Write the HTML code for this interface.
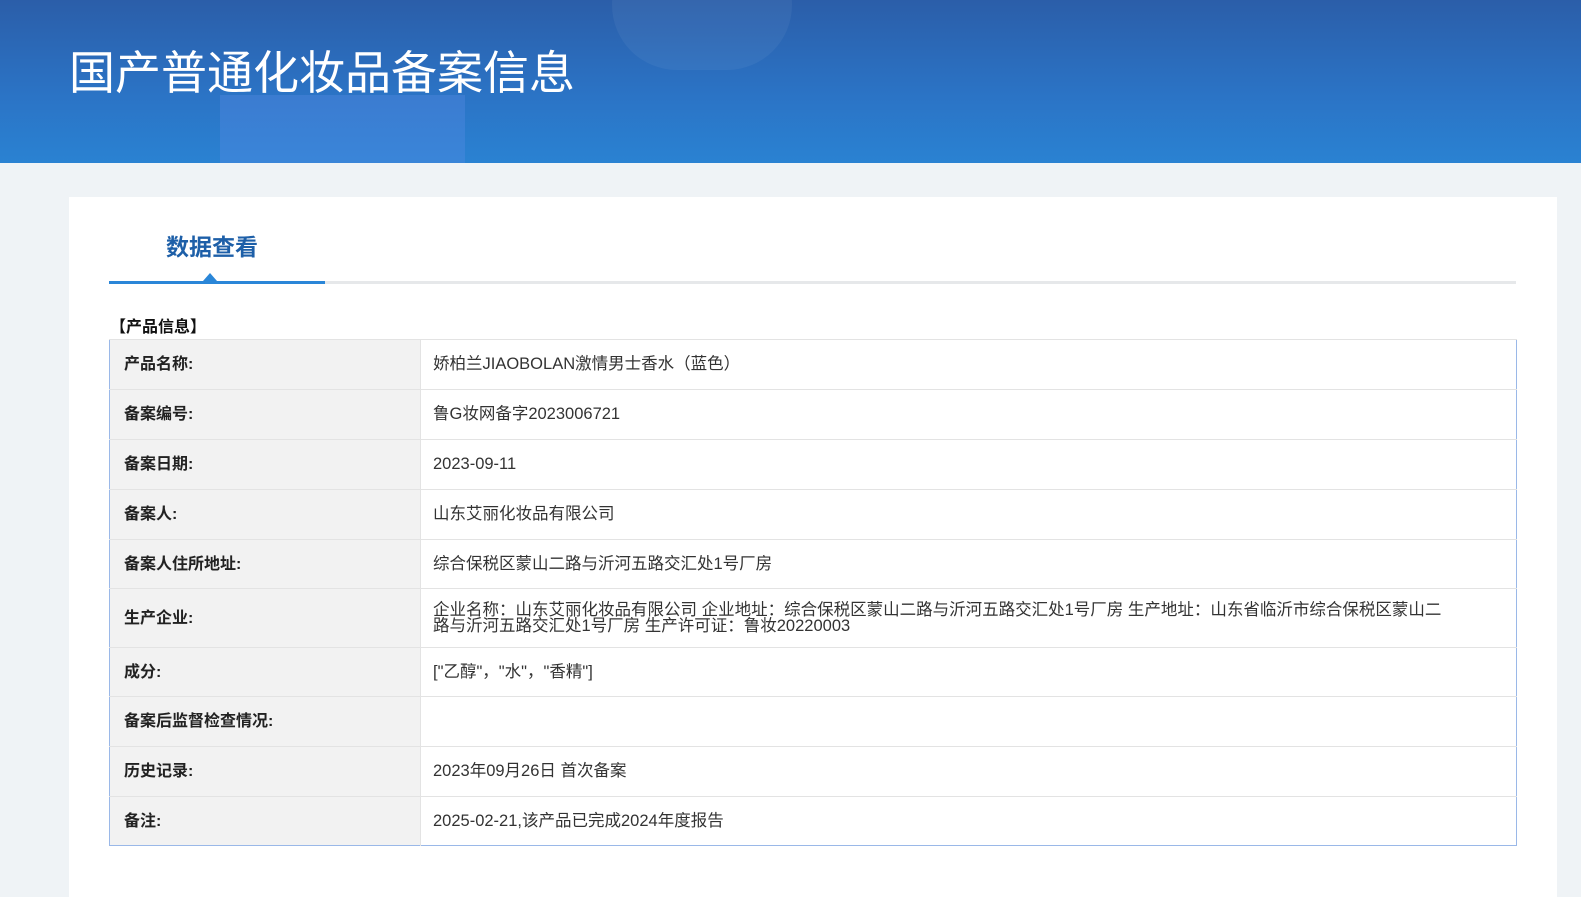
<!DOCTYPE html>
<html><head><meta charset="utf-8"><style>
*{margin:0;padding:0;box-sizing:border-box}
body{width:1581px;height:882px;overflow:hidden;background:#eff3f6;font-family:"Liberation Sans","Noto Sans CJK SC",sans-serif;color:#333;position:relative}
.hd{position:absolute;left:0;top:0;width:1581px;height:163px;background:linear-gradient(180deg,#2b5ea9 0%,#2b74c6 60%,#2a82d2 100%);overflow:hidden}
.hd .b1{position:absolute;left:612px;top:-60px;width:180px;height:130px;border-radius:90px;background:rgba(255,255,255,.05)}
.hd .b2{position:absolute;left:220px;top:95px;width:245px;height:80px;background:rgba(90,140,230,.35)}
.hd h1{position:absolute;left:69px;top:44px;font-size:46px;font-weight:400;color:#fff;line-height:58px}
.card{position:absolute;left:69px;top:197px;width:1488px;height:700px;background:#fff}
.tab{position:absolute;left:166px;top:233px;font-size:23px;font-weight:bold;color:#1d5fa8;line-height:28px}
.line{position:absolute;left:109px;top:281px;width:1407px;height:3px;background:#e6e8ea}
.line i{position:absolute;left:0;top:0;width:216px;height:3px;background:#2a86d8}
.tri{position:absolute;left:203px;top:273px;width:0;height:0;border-left:7px solid transparent;border-right:7px solid transparent;border-bottom:8px solid #2a86d8}
.sec{position:absolute;left:110px;top:317px;font-size:16px;font-weight:bold;color:#111;line-height:22px}
table{position:absolute;left:109px;top:339px;width:1408px;border-collapse:collapse;border:1px solid #9ab8e8;font-size:16.5px}
td{border-top:1px solid #e3e3e3;vertical-align:middle;line-height:17px}
td.l{width:311px;background:#f2f2f2;font-weight:bold;color:#222;padding-left:14px;border-right:1px solid #e3e3e3;font-size:16px}
td.v{padding-left:12px;color:#333}
</style></head><body>
<div class="hd"><div class="b1"></div><div class="b2"></div><h1>国产普通化妆品备案信息</h1></div>
<div class="card"></div>
<div class="tab">数据查看</div>
<div class="line"><i></i></div>
<div class="tri"></div>
<div class="sec">【产品信息】</div>
<table>
<tr style="height:50px"><td class="l">产品名称:</td><td class="v">娇柏兰JIAOBOLAN激情男士香水（蓝色）</td></tr>
<tr style="height:50px"><td class="l">备案编号:</td><td class="v">鲁G妆网备字2023006721</td></tr>
<tr style="height:50px"><td class="l">备案日期:</td><td class="v">2023-09-11</td></tr>
<tr style="height:50px"><td class="l">备案人:</td><td class="v">山东艾丽化妆品有限公司</td></tr>
<tr style="height:49px"><td class="l">备案人住所地址:</td><td class="v">综合保税区蒙山二路与沂河五路交汇处1号厂房</td></tr>
<tr style="height:59px"><td class="l">生产企业:</td><td class="v" style="line-height:16px">企业名称：山东艾丽化妆品有限公司 企业地址：综合保税区蒙山二路与沂河五路交汇处1号厂房 生产地址：山东省临沂市综合保税区蒙山二<br>路与沂河五路交汇处1号厂房 生产许可证：鲁妆20220003</td></tr>
<tr style="height:49px"><td class="l">成分:</td><td class="v">["乙醇"，"水"，"香精"]</td></tr>
<tr style="height:50px"><td class="l">备案后监督检查情况:</td><td class="v"></td></tr>
<tr style="height:50px"><td class="l">历史记录:</td><td class="v">2023年09月26日 首次备案</td></tr>
<tr style="height:49px"><td class="l">备注:</td><td class="v">2025-02-21,该产品已完成2024年度报告</td></tr>
</table>
</body></html>
